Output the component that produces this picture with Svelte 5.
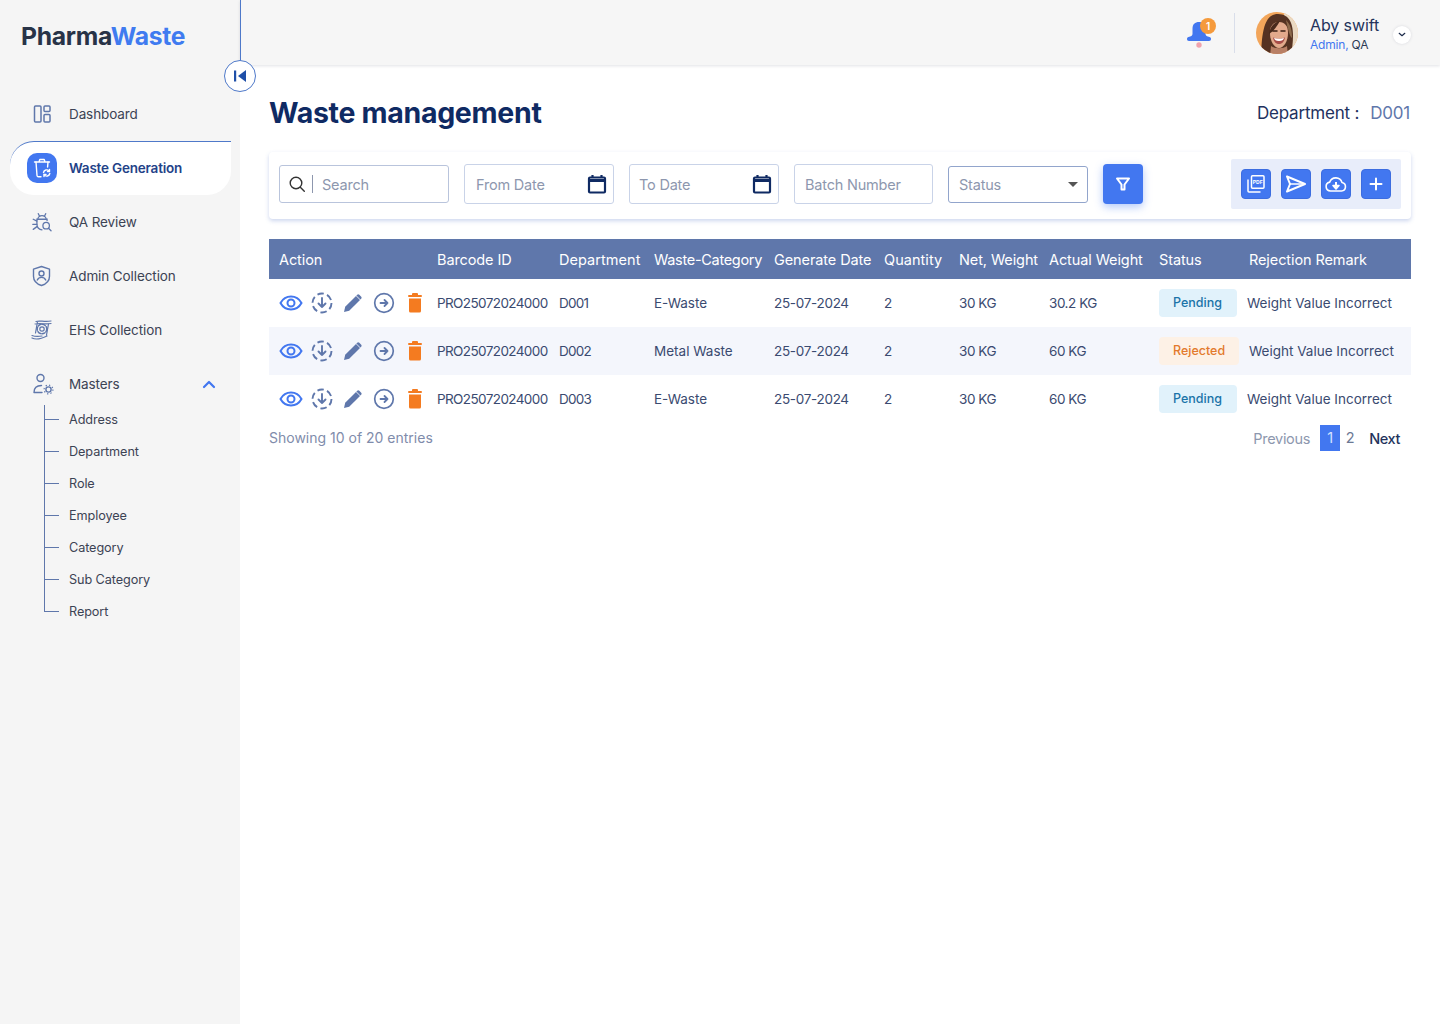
<script>
  const subItems = ['Address', 'Department', 'Role', 'Employee', 'Category', 'Sub Category', 'Report'];

  const rows = [
    { id: 'PRO25072024000', dept: 'D001', cat: 'E-Waste', date: '25-07-2024', qty: '2', net: '30 KG', actual: '30.2 KG', status: 'Pending' },
    { id: 'PRO25072024000', dept: 'D002', cat: 'Metal Waste', date: '25-07-2024', qty: '2', net: '30 KG', actual: '60 KG', status: 'Rejected' },
    { id: 'PRO25072024000', dept: 'D003', cat: 'E-Waste', date: '25-07-2024', qty: '2', net: '30 KG', actual: '60 KG', status: 'Pending' }
  ];
</script>

<div class="app">
  <aside class="sidebar">
    <div class="logo">Pharma<span>Waste</span></div>

    <nav class="menu">
      <div class="item">
        <svg class="icon" viewBox="0 0 24 24" fill="none" stroke="#5f77ab" stroke-width="1.5">
          <rect x="4.5" y="4" width="6.5" height="16" rx="1" />
          <rect x="14" y="4" width="6" height="5.500" rx="1" />
          <rect x="14" y="12.500" width="6" height="7.500" rx="1" />
        </svg>
        <span>Dashboard</span>
      </div>

      <div class="item active">
        <span class="active-icon">
          <svg viewBox="0 0 24 24" width="24" height="24" fill="none" stroke="#fff" stroke-width="1.4" stroke-linecap="round" stroke-linejoin="round">
            <path d="M4.500 6h15M9 6l.8-2.500h4.400L15 6" />
            <path d="M6 6l1 13.500a1.500 1.500 0 0 0 1.500 1.300h2.500M18 6l-.4 5" />
            <path d="M13.500 16.500a3.200 3.200 0 0 1 5.600-1.400M19.800 17.500a3.200 3.200 0 0 1-5.600 1.400" />
            <path d="M19.500 13.500v2h-2M14 20.500v-2h2" />
          </svg>
        </span>
        <span>Waste Generation</span>
      </div>

      <div class="item">
        <svg class="icon" viewBox="-1 -1 26 26" fill="none" stroke="#5f77ab" stroke-width="1.4" stroke-linecap="round">
          <path d="M8 3l1.500 3M16 3l-1.500 3" />
          <path d="M7.500 9a4.500 4 0 0 1 9 0" />
          <path d="M12 20.500c-3 0-5.500-2.500-5.500-6V9h11v1.500" />
          <path d="M2.500 9l4 2M2.500 20l4-3M2 14.500h4.500" />
          <circle cx="16.500" cy="16" r="3.500" />
          <path d="M19 18.700l2.800 2.800" />
        </svg>
        <span>QA Review</span>
      </div>

      <div class="item">
        <svg class="icon" viewBox="0 0 24 24" fill="none" stroke="#5f77ab" stroke-width="1.4" stroke-linecap="round" stroke-linejoin="round">
          <path d="M11.500 2.500l8 2.700v7c0 4.500-3.500 7.800-8 9.300-4.500-1.500-8-4.800-8-9.300v-7z" />
          <circle cx="11.500" cy="9.500" r="2.500" />
          <path d="M7.300 16c.8-1.800 2.400-2.600 4.200-2.600s3.400.8 4.200 2.600" />
        </svg>
        <span>Admin Collection</span>
      </div>

      <div class="item">
        <svg class="icon" viewBox="0 0 24 24" fill="none" stroke="#5f77ab" stroke-width="1.2" stroke-linecap="round">
          <circle cx="12" cy="11" r="2.200" />
          <circle cx="12" cy="11" r="4.800" stroke-dasharray="3 1.500" stroke-width="1.500" />
          <path d="M6 3.500c4-1.500 8 1 15-.5M5 6c5-1 10 .5 16-.5M7.500 3.500L5.500 15" />
          <path d="M2 20c5 2.500 10 .5 15-2M2 17.500c4 1.500 7 1 10 .5M18.500 6l-2 11" />
        </svg>
        <span>EHS Collection</span>
      </div>

      <div class="item">
        <svg class="icon" viewBox="0 0 24 24" fill="none" stroke="#5f77ab" stroke-width="1.4" stroke-linecap="round">
          <circle cx="10.500" cy="6" r="3.500" />
          <path d="M4 20.500c0-4.500 3-7 7.500-7M4 20.500h8" />
          <circle cx="18.500" cy="17.500" r="2.600" />
          <circle cx="18.500" cy="17.500" r="4.400" stroke-dasharray="1.300 2.150" stroke-width="1.200" stroke-linecap="butt" />
        </svg>
        <span>Masters</span>
        <svg class="chev" viewBox="0 0 14 9" width="14" height="9" fill="none" stroke="#4277f0" stroke-width="2.200" stroke-linecap="round" stroke-linejoin="round">
          <path d="M2 7l5-5 5 5" />
        </svg>
      </div>

      <ul class="sub">
        {#each subItems as sub}
          <li>{sub}</li>
        {/each}
      </ul>
    </nav>
  </aside>

  <div class="page">
    <header class="topbar">
      <div class="bell">
        <svg viewBox="0 0 26 28" width="26" height="28">
          <path d="M6.500 9C6.500 4 9 2 13 2s6.500 2 6.500 7v5c0 1.500 1.500 2.500 4 3 1 .3 1.500 1 1.500 2s-.7 2-2 2H3c-1.300 0-2-1-2-2s.5-1.700 1.500-2c2.500-.5 4-1.500 4-3z" fill="#4277f0" />
          <circle cx="13" cy="25" r="2.700" fill="#f0a3ad" />
        </svg>
        <span class="badge">1</span>
      </div>
      <div class="divider"></div>
      <svg class="avatar" viewBox="0 0 42 42" width="42" height="42">
        <defs>
          <clipPath id="avatar-clip"><circle cx="21" cy="21" r="21" /></clipPath>
          <filter id="avatar-soft"><feGaussianBlur stdDeviation="0.7" /></filter>
        </defs>
        <g clip-path="url(#avatar-clip)">
          <rect width="42" height="42" fill="#f2a55a" />
          <rect x="28" width="14" height="42" fill="#ead9c2" />
          <g filter="url(#avatar-soft)">
            <path d="M5 44C6 24 7 2 22 2c12 0 15 11 15 21 0 8-1 14-2 21z" fill="#553220" />
            <path d="M30 8c5 5 6 11 6 18-2-1-4-8-6-18z" fill="#8d6a4c" />
            <path d="M15 34c4 3 12 3 16 0l1 10H14z" fill="#b98066" />
            <path d="M14 21c0-7 3-11 9-11s9 4 9 11c0 8-4 15-9 15s-9-7-9-15z" fill="#e2aa8c" />
            <path d="M13 22c1-7 5-12 11-13-3 5-6 10-11 13z" fill="#4a2b1b" />
            <path d="M17 25.500c4 1.500 8 1.500 12 0-1 5-3.500 6.500-6 6.500s-5-1.500-6-6.500z" fill="#a84e48" />
            <path d="M18 26c3.500 1 7 1 10 0-.5 2-2 3-5 3s-4.500-1-5-3z" fill="#fff" />
            <path d="M17 19h4M25 19h4" stroke="#3a2216" stroke-width="1.500" stroke-linecap="round" />
          </g>
        </g>
      </svg>
      <div class="user">
        <div class="user-name">Aby swift</div>
        <div class="user-role"><span>Admin,</span> QA</div>
      </div>
      <div class="user-menu">
        <svg viewBox="0 0 10 6" width="8" height="5" fill="none" stroke="#1c2b4a" stroke-width="1.500" stroke-linecap="round" stroke-linejoin="round">
          <path d="M1.500 1.500L5 4.500l3.500-3" />
        </svg>
      </div>
    </header>

    <main class="content">
      <div class="title-row">
        <h1>Waste management</h1>
        <div class="dept">Department : <span>D001</span></div>
      </div>

      <div class="filters">
        <div class="field search">
          <svg viewBox="0 0 18 18" width="18" height="18" fill="none" stroke="#333" stroke-width="1.400" stroke-linecap="round">
            <circle cx="8" cy="8" r="5.800" />
            <path d="M12.300 12.300l4 4" />
          </svg>
          <span class="sep"></span>
          <span class="ph">Search</span>
        </div>

        <div class="field date">
          <span class="ph">From Date</span>
          <svg viewBox="0 0 20 20" width="20" height="20" fill="none" stroke="#0f2a63" stroke-width="2.200">
            <rect x="2" y="3.500" width="16" height="15" rx="1" />
            <path d="M2 6.500h16" stroke-width="3" />
            <path d="M5.500 1v3M14.500 1v3" />
          </svg>
        </div>

        <div class="field date to">
          <span class="ph">To Date</span>
          <svg viewBox="0 0 20 20" width="20" height="20" fill="none" stroke="#0f2a63" stroke-width="2.200">
            <rect x="2" y="3.500" width="16" height="15" rx="1" />
            <path d="M2 6.500h16" stroke-width="3" />
            <path d="M5.500 1v3M14.500 1v3" />
          </svg>
        </div>

        <div class="field batch"><span class="ph">Batch Number</span></div>

        <div class="field status-select">
          <span class="ph">Status</span>
          <span class="caret"></span>
        </div>

        <button class="filter-btn" aria-label="Filter">
          <svg viewBox="0 0 16 16" width="16" height="16" fill="none" stroke="#fff" stroke-width="2" stroke-linejoin="round">
            <path d="M2 2.500h12L9.500 8.500v5h-3v-5z" />
          </svg>
        </button>

        <div class="actions">
          <button class="act" aria-label="PDF">
            <svg viewBox="0 0 20 20" width="20" height="20" fill="none" stroke="#fff" stroke-width="1.500">
              <path d="M2 5.500V17a1 1 0 0 0 1 1h11.500" />
              <rect x="5.500" y="1.800" width="12.500" height="12.500" rx="1" />
              <text class="pdf" x="11.750" y="10">PDF</text>
            </svg>
          </button>
          <button class="act" aria-label="Send">
            <svg viewBox="0 0 22 20" width="22" height="20" fill="none" stroke="#fff" stroke-width="2" stroke-linejoin="round">
              <path d="M2 2.500L20 10 2 17.500l3-7.500z" />
              <path d="M5 10h15" stroke-width="1.500" />
            </svg>
          </button>
          <button class="act" aria-label="Upload">
            <svg viewBox="0 0 24 20" width="24" height="20" fill="none" stroke="#fff" stroke-width="1.600" stroke-linejoin="round">
              <path d="M6.500 17a4.500 4.500 0 0 1-.8-8.900A6.500 6.500 0 0 1 18 8.500a4.300 4.300 0 0 1-.5 8.500z" />
              <path d="M9 11.500h6L12 15z" fill="#fff" />
              <path d="M12 8v4" stroke-width="2" />
            </svg>
          </button>
          <button class="act" aria-label="Add">
            <svg viewBox="0 0 14 14" width="14" height="14" fill="none" stroke="#fff" stroke-width="2" stroke-linecap="round">
              <path d="M7 1.500v11M1.500 7h11" />
            </svg>
          </button>
        </div>
      </div>

      <div class="table">
        <div class="row head">
          <div>Action</div>
          <div>Barcode ID</div>
          <div class="loose">Department</div>
          <div class="tight">Waste-Category</div>
          <div>Generate Date</div>
          <div class="loose">Quantity</div>
          <div>Net, Weight</div>
          <div>Actual Weight</div>
          <div class="head-status">Status</div>
          <div>Rejection Remark</div>
        </div>

        {#each rows as row}
          <div class="row body">
            <div class="row-actions">
              <svg viewBox="0 0 24 24" width="24" height="24" fill="none" stroke="#4277f0" stroke-width="2">
                <path d="M1.500 12C4 7.500 7.500 5.500 12 5.500s8 2 10.500 6.500c-2.500 4.500-6 6.500-10.500 6.500S4 16.500 1.500 12z" />
                <circle cx="12" cy="12" r="3.500" />
              </svg>
              <svg viewBox="0 0 22 22" width="22" height="22" fill="none" stroke="#5f77ab" stroke-width="1.900" stroke-linejoin="round">
                <circle cx="11" cy="11" r="9.500" stroke-dasharray="6.500 3.450" />
                <path d="M11 6v9M7.500 11.500L11 15l3.500-3.500" stroke-linecap="round" />
              </svg>
              <svg viewBox="0 0 20 20" width="20" height="20" fill="#5f77ab">
                <path d="M1 19l1.200-5.200L13 3l4 4L6.200 17.800z" />
                <path d="M14.200 1.800a1.500 1.500 0 0 1 2.100 0l1.900 1.900a1.500 1.500 0 0 1 0 2.100l-.8.800-4-4z" />
              </svg>
              <svg viewBox="0 0 22 22" width="22" height="22" fill="none" stroke="#5f77ab" stroke-width="1.700" stroke-linecap="round" stroke-linejoin="round">
                <circle cx="11" cy="11" r="9.300" />
                <path d="M7.500 11h7M11.500 8l3 3-3 3" stroke-width="1.800" />
              </svg>
              <svg viewBox="0 0 14 20" width="14" height="20" fill="#f47b20">
                <rect x="0" y="2" width="14" height="2" rx="1" />
                <rect x="4" y="0" width="6" height="3" rx="1" />
                <path d="M1 5.500h12v12.500a1.500 1.500 0 0 1-1.500 1.500h-9A1.500 1.500 0 0 1 1 18z" />
              </svg>
            </div>
            <div class="code">{row.id}</div>
            <div class="dept-cell">{row.dept}</div>
            <div>{row.cat}</div>
            <div class="date-cell">{row.date}</div>
            <div>{row.qty}</div>
            <div class="weight">{row.net}</div>
            <div class="weight">{row.actual}</div>
            <div class="status-cell">
              <span class="pill {row.status.toLowerCase()}">{row.status}</span>
            </div>
            <div>Weight Value Incorrect</div>
          </div>
        {/each}
      </div>

      <div class="table-footer">
        <div class="entries">Showing 10 of 20 entries</div>
        <div class="pager">
          <span class="prev">Previous</span>
          <span class="num current">1</span>
          <span class="num">2</span>
          <span class="next">Next</span>
        </div>
      </div>
    </main>
  </div>

  <div class="edge"></div>
  <button class="collapse" aria-label="Collapse sidebar">
    <svg viewBox="0 0 14 14" width="14" height="14" fill="#1f4fa8">
      <rect x="1" y="1.500" width="2.200" height="11" />
      <path d="M13 1v12L5 7z" />
    </svg>
  </button>
</div>

<style>
  :global(body) {
    margin: 0;
    background: #fff;
    font-family: Inter, 'Liberation Sans', sans-serif;
    color: #2d3a55;
  }

  .app {
    display: flex;
    position: relative;
    min-height: 1024px;
  }

  .sidebar {
    width: 240px;
    flex: none;
    background: #f5f5f5;
    box-sizing: border-box;
    padding-left: 10px;
  }

  .logo {
    margin: 21px 0 0 11px;
    height: 30px;
    line-height: 30px;
    font-size: 24.7px;
    font-weight: 700;
    letter-spacing: -0.3px;
    color: #283347;
  }

  .logo span {
    color: #3f7bf0;
  }

  .menu {
    margin-top: 36px;
  }

  .item {
    display: flex;
    align-items: center;
    width: 221px;
    height: 54px;
    box-sizing: border-box;
    padding-left: 20px;
    font-size: 13.5px;
    letter-spacing: -0.1px;
    color: #3c4354;
  }

  .icon {
    width: 24px;
    height: 24px;
    margin-right: 15px;
    flex: none;
  }

  .chev {
    margin-left: auto;
    margin-right: 15px;
  }

  .item.active {
    background: #fff;
    border-top: 1px solid #4f79c9;
    border-radius: 24px 0 24px 24px;
    padding-left: 17px;
    padding-bottom: 1px;
    font-weight: 600;
    letter-spacing: -0.2px;
    color: #234288;
  }

  .active-icon {
    width: 30px;
    height: 30px;
    margin-right: 12px;
    border-radius: 10px;
    background: #4277f0;
    display: flex;
    align-items: center;
    justify-content: center;
  }

  .sub {
    list-style: none;
    margin: -6px 0 0 34px;
    padding: 0;
    border-left: 1px solid #5f77ab;
    height: 207px;
  }

  .sub li {
    position: relative;
    height: 32px;
    line-height: 32px;
    padding-left: 24px;
    font-size: 12.7px;
    letter-spacing: -0.1px;
    color: #3c4354;
    top: -1px;
  }

  .sub li::before {
    content: '';
    position: absolute;
    left: 0;
    top: 15px;
    width: 14px;
    height: 1px;
    background: #5f77ab;
  }

  .page {
    flex: 1;
    min-width: 0;
  }

  .topbar {
    height: 65px;
    background: #f6f6f6;
    box-shadow: 0 1px 3px rgba(40, 50, 80, 0.14);
    display: flex;
    align-items: center;
    justify-content: flex-end;
    padding-right: 29px;
  }

  .bell {
    position: relative;
    width: 26px;
    height: 28px;
    margin-right: 22px;
    margin-top: 2px;
  }

  .badge {
    position: absolute;
    right: -4px;
    top: -2px;
    width: 16px;
    height: 16px;
    border-radius: 50%;
    background: #f59a3c;
    color: #fff;
    font-size: 10px;
    font-weight: 600;
    line-height: 16px;
    text-align: center;
  }

  .divider {
    width: 1px;
    height: 40px;
    background: #d9deea;
    margin-right: 21px;
  }

  .avatar {
    margin-right: 12px;
  }

  .user {
    width: 83px;
  }

  .user-name {
    font-size: 16px;
    line-height: 22px;
    margin-top: 2px;
    color: #23335c;
    letter-spacing: -0.1px;
  }

  .user-role {
    font-size: 12px;
    line-height: 18px;
    letter-spacing: -0.2px;
    color: #2d3a55;
  }

  .user-role span {
    color: #4277f0;
  }

  .user-menu {
    width: 18px;
    height: 18px;
    border-radius: 50%;
    background: #fff;
    box-shadow: 0 0 3px rgba(40, 50, 80, 0.15);
    display: flex;
    align-items: center;
    justify-content: center;
    margin-top: 4px;
  }

  .content {
    padding: 0 29px;
  }

  .title-row {
    display: flex;
    justify-content: space-between;
    align-items: center;
    height: 87px;
  }

  h1 {
    margin: 8px 0 0;
    font-size: 28.5px;
    font-weight: 700;
    letter-spacing: -0.3px;
    color: #0f2a63;
  }

  .dept {
    margin-top: 8px;
    padding-right: 1px;
    font-size: 17px;
    color: #1e3160;
    display: flex;
    gap: 11px;
    letter-spacing: -0.2px;
  }

  .dept span {
    color: #5f77ab;
  }

  .filters {
    height: 67px;
    box-sizing: border-box;
    display: flex;
    align-items: center;
    padding: 0 10px 3px;
    background: #fff;
    border-radius: 4px;
    box-shadow: 0 2px 4px rgba(90, 120, 200, 0.3);
  }

  .field {
    display: flex;
    align-items: center;
    box-sizing: border-box;
    border: 1px solid #c9d3e8;
    border-radius: 3px;
    height: 40px;
    padding: 0 10px;
    margin-right: 15px;
    flex: none;
  }

  .ph {
    font-size: 14.5px;
    letter-spacing: -0.2px;
    color: #8d97ae;
  }

  .search {
    width: 170px;
    height: 38px;
    padding: 0 8px;
    border-color: #b9c4dc;
  }

  .sep {
    width: 1px;
    height: 18px;
    background: #8d97ae;
    margin: 0 9px 0 6px;
  }

  .date {
    width: 150px;
    justify-content: space-between;
    padding-left: 11px;
    padding-right: 6px;
  }

  .date.to {
    padding-left: 9px;
  }

  .batch {
    width: 139px;
  }

  .status-select {
    width: 140px;
    height: 37px;
    border-color: #92a5cc;
    justify-content: space-between;
  }

  .caret {
    width: 0;
    height: 0;
    border-left: 5px solid transparent;
    border-right: 5px solid transparent;
    border-top: 5px solid #555;
    margin-right: -1px;
  }

  .filter-btn {
    width: 40px;
    height: 40px;
    flex: none;
    border: none;
    border-radius: 4px;
    background: #4277f0;
    box-shadow: 0 3px 8px rgba(66, 119, 240, 0.4);
    display: flex;
    align-items: center;
    justify-content: center;
    padding: 0;
  }

  .actions {
    margin-left: auto;
    display: flex;
    gap: 10px;
    padding: 10px;
    background: #e8edfa;
    border-radius: 2px;
  }

  .act {
    width: 30px;
    height: 30px;
    padding: 0;
    border: 1px solid #3c6de0;
    border-radius: 4px;
    background: #4277f0;
    display: flex;
    align-items: center;
    justify-content: center;
  }

  .pdf {
    font-family: Inter, sans-serif;
    font-size: 5px;
    font-weight: 700;
    fill: #fff;
    stroke: none;
    text-anchor: middle;
  }

  .table {
    margin-top: 20px;
  }

  .row {
    display: grid;
    grid-template-columns: 158px 122px 95px 120px 110px 75px 90px 110px auto 1fr;
    align-items: center;
    padding-left: 10px;
  }

  .head {
    height: 40px;
    background: #5f77ab;
    color: #fff;
    font-size: 14.5px;
    letter-spacing: -0.1px;
  }

  .head .loose {
    letter-spacing: 0.05px;
  }

  .head .tight {
    letter-spacing: -0.3px;
  }

  .head-status {
    width: 90px;
  }

  .body {
    height: 48px;
    font-size: 13.5px;
    color: #3a4a70;
  }

  .body:nth-child(3) {
    background: #f4f6fc;
  }

  .code {
    letter-spacing: -0.6px;
  }

  .dept-cell {
    letter-spacing: -0.8px;
  }

  .date-cell {
    letter-spacing: -0.3px;
  }

  .weight {
    letter-spacing: -0.45px;
  }

  .row-actions {
    display: flex;
    align-items: center;
  }

  .row-actions svg:nth-child(2) {
    margin-left: 8px;
  }

  .row-actions svg:nth-child(3),
  .row-actions svg:nth-child(4) {
    margin-left: 10px;
  }

  .row-actions svg:nth-child(5) {
    margin-left: 13px;
  }

  .status-cell {
    padding-right: 10px;
  }

  .pill {
    display: block;
    height: 28px;
    line-height: 27px;
    box-sizing: border-box;
    padding: 0 14px;
    border-radius: 4px;
    font-size: 12.5px;
    font-weight: 500;
  }

  .pending {
    width: 78px;
    background: #e1f2fb;
    color: #1b74a8;
  }

  .rejected {
    width: 80px;
    background: #fdf1e6;
    color: #e37a2c;
  }

  .table-footer {
    display: flex;
    justify-content: space-between;
    align-items: center;
    height: 28px;
  }

  .entries {
    font-size: 14px;
    color: #7f8cab;
  }

  .pager {
    display: flex;
    align-items: center;
    margin-top: 2px;
    font-size: 14.5px;
    padding-right: 11px;
  }

  .prev {
    color: #8d97ae;
    margin-right: 10px;
    letter-spacing: -0.3px;
  }

  .num {
    width: 20px;
    height: 26px;
    line-height: 26px;
    text-align: center;
    color: #6b7894;
    margin-right: 9px;
  }

  .num.current {
    background: #4277f0;
    color: #d6e2ff;
    margin-right: 0;
  }

  .next {
    color: #23335c;
    font-weight: 500;
    letter-spacing: -0.4px;
  }

  .edge {
    position: absolute;
    left: 240px;
    top: 0;
    width: 1px;
    height: 62px;
    background: #4f79c9;
  }

  .collapse {
    position: absolute;
    left: 224px;
    top: 60px;
    width: 32px;
    height: 32px;
    padding: 0;
    border: 1px solid #4f79c9;
    border-radius: 50%;
    background: #fff;
    display: flex;
    align-items: center;
    justify-content: center;
  }
</style>
